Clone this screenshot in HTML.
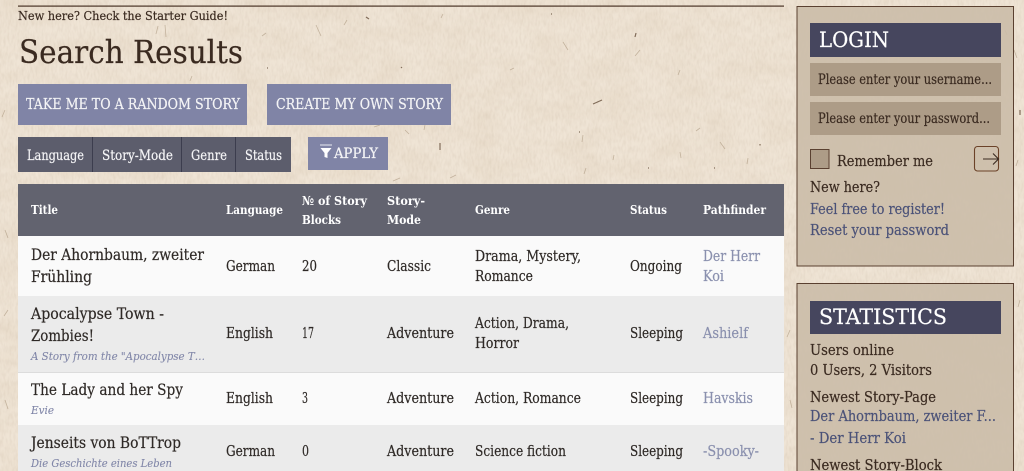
<!DOCTYPE html>
<html lang="en"><head><meta charset="utf-8"><title>Search Results</title>
<style>
html,body{margin:0;padding:0;width:1024px;height:471px;overflow:hidden;background:#efe4d5}
svg{display:block;position:absolute;left:0;top:0}
text{font-family:"DejaVu Serif","Liberation Serif",serif;font-size:14.5px;fill:#2e2926;stroke:#2e2926;stroke-width:.2px}
.h{font-weight:700;font-size:12.5px;fill:#fff;stroke:none}
.t{font-size:15.5px}
.i{font-style:italic;font-size:11.5px;fill:#8086a8;stroke:#8086a8;stroke-width:.1px}
.l{fill:#8a90ae;stroke:#8a90ae}
.s{fill:#3a2a20;stroke:#3a2a20}
.a{fill:#4b5278;stroke:#4b5278}
.w{fill:#f4f4f6;stroke:#f4f4f6}
</style></head><body>
<svg width="1024" height="471" viewBox="0 0 1024 471">
<defs>
<filter id="mot" x="0" y="0" width="100%" height="100%"><feTurbulence type="fractalNoise" baseFrequency=".03 .05" numOctaves="3" seed="5"/><feColorMatrix values="0 0 0 0 .6  0 0 0 0 .47  0 0 0 0 .32  .3 0 0 0 -.1"/></filter>
<filter id="fine" x="0" y="0" width="100%" height="100%"><feTurbulence type="fractalNoise" baseFrequency=".5 .15" numOctaves="2" seed="9"/><feColorMatrix values="0 0 0 0 .5  0 0 0 0 .4  0 0 0 0 .3  0 .35 0 0 -.13"/></filter>
</defs>
<rect width="1024" height="471" fill="#efe4d5"/>
<rect width="1024" height="471" filter="url(#mot)"/>
<rect width="1024" height="471" filter="url(#fine)"/>
<path fill="none" stroke="#a8957c" stroke-width=".8" opacity=".6" d="M316 25l5 11M266 33l-4 3M347 20l-3 5M165 25l1 12M156 34l2-8M443 14l-2 4M192 76l-2 5M380 125l-6 2M405 130l4 4M425 125l-1 5M563 42l5 8M640 50l-5 6M700 128l-4 3M720 142l5 7M583 135l-1 7M514 68l-4 2M680 70l-2 5M5 110l-3 7M5 230l3 8M8 310l-4 6M5 400l3 9M1014 50l3 8M1005 30l2 5M1018 160l-2 6M1020 300l-2 7M790 330l-3 7M790 400l2 8M400 178l-7 3M450 178l6-3M586 168l-2 6M614 155l-1 5M680 152l1 6M748 158l-1 6"/>
<path fill="none" stroke="#5d4632" stroke-width="1.2" opacity=".75" d="M366 17l3 2M267 68h1M401 67l1 1M440 143v7M636 33l-1 4M593 104l9-4M551 14h1M760 144v1.500M579 132h1M714 168h1M648 168h1M1020 110v5"/>

<!-- top -->
<rect x="18" y="5.500" width="766" height="1.200" fill="#4a3426"/>
<text x="18" y="20" class="s" lengthAdjust="spacingAndGlyphs" textLength="210" style="font-size:12.5px">New here? Check the Starter Guide!</text>
<text x="19" y="63" class="s" lengthAdjust="spacingAndGlyphs" textLength="224" style="font-size:32px">Search Results</text>

<!-- buttons -->
<rect x="18" y="84" width="229" height="41" fill="#8084a6"/>
<rect x="267" y="84" width="184" height="41" fill="#8084a6"/>
<text x="26" y="109" class="w" lengthAdjust="spacingAndGlyphs" textLength="214" style="font-size:14.5px">TAKE ME TO A RANDOM STORY</text>
<text x="276" y="109" class="w" lengthAdjust="spacingAndGlyphs" textLength="167" style="font-size:14.5px">CREATE MY OWN STORY</text>

<!-- filters -->
<rect x="18" y="137" width="273" height="35" fill="#5c5d6c"/>
<path d="M92.500 137v35M181.500 137v35M235.500 137v35" stroke="#3c3d4e" stroke-width="1"/>
<text x="27" y="160" class="w" lengthAdjust="spacingAndGlyphs" textLength="57" style="font-size:13.5px">Language</text>
<text x="102" y="160" class="w" lengthAdjust="spacingAndGlyphs" textLength="71" style="font-size:13.5px">Story-Mode</text>
<text x="191" y="160" class="w" lengthAdjust="spacingAndGlyphs" textLength="36" style="font-size:13.5px">Genre</text>
<text x="245" y="160" class="w" lengthAdjust="spacingAndGlyphs" textLength="37" style="font-size:13.5px">Status</text>
<rect x="308" y="137" width="80" height="33" fill="#8084a6"/>
<path d="M320 145h12" stroke="#d8d9e4" stroke-width="1.200"/>
<path d="M320.500 148h11l-4 5v5l-3-1v-4z" fill="#fff"/>
<text x="334" y="158" class="w" lengthAdjust="spacingAndGlyphs" textLength="44" style="font-size:13.500px">APPLY</text>

<!-- table -->
<rect x="18" y="184" width="766" height="52" fill="#62636f"/>
<rect x="18" y="236" width="766" height="60" fill="#fafafa"/>
<rect x="18" y="296" width="766" height="76" fill="#ebebeb"/>
<rect x="18" y="372" width="766" height="53" fill="#fafafa"/>
<rect x="18" y="425" width="766" height="46" fill="#ebebeb"/>
<path d="M18 372.500h766" stroke="#dcdcdc"/>

<text x="31" y="214" class="h" lengthAdjust="spacingAndGlyphs" textLength="27">Title</text>
<text x="226" y="214" class="h" lengthAdjust="spacingAndGlyphs" textLength="57">Language</text>
<text x="302" y="205" class="h" lengthAdjust="spacingAndGlyphs" textLength="65">№ of Story</text>
<text x="302" y="224" class="h" lengthAdjust="spacingAndGlyphs" textLength="39">Blocks</text>
<text x="387" y="205" class="h" lengthAdjust="spacingAndGlyphs" textLength="38">Story-</text>
<text x="387" y="224" class="h" lengthAdjust="spacingAndGlyphs" textLength="34">Mode</text>
<text x="475" y="214" class="h" lengthAdjust="spacingAndGlyphs" textLength="35">Genre</text>
<text x="630" y="214" class="h" lengthAdjust="spacingAndGlyphs" textLength="37">Status</text>
<text x="703" y="214" class="h" lengthAdjust="spacingAndGlyphs" textLength="63">Pathfinder</text>

<text x="31" y="260" class="t" lengthAdjust="spacingAndGlyphs" textLength="173">Der Ahornbaum, zweiter</text>
<text x="31" y="282" class="t" lengthAdjust="spacingAndGlyphs" textLength="61">Frühling</text>
<text x="226" y="271" lengthAdjust="spacingAndGlyphs" textLength="49">German</text>
<text x="302" y="271" lengthAdjust="spacingAndGlyphs" textLength="15">20</text>
<text x="387" y="271" lengthAdjust="spacingAndGlyphs" textLength="44">Classic</text>
<text x="475" y="261" lengthAdjust="spacingAndGlyphs" textLength="106">Drama, Mystery,</text>
<text x="475" y="281" lengthAdjust="spacingAndGlyphs" textLength="58">Romance</text>
<text x="630" y="271" lengthAdjust="spacingAndGlyphs" textLength="52">Ongoing</text>
<text x="703" y="261" class="l" lengthAdjust="spacingAndGlyphs" textLength="57">Der Herr</text>
<text x="703" y="281" class="l" lengthAdjust="spacingAndGlyphs" textLength="21">Koi</text>

<text x="31" y="319" class="t" lengthAdjust="spacingAndGlyphs" textLength="133">Apocalypse Town -</text>
<text x="31" y="341" class="t" lengthAdjust="spacingAndGlyphs" textLength="63">Zombies!</text>
<text x="31" y="360" class="i" lengthAdjust="spacingAndGlyphs" textLength="174">A Story from the "Apocalypse T…</text>
<text x="226" y="338" lengthAdjust="spacingAndGlyphs" textLength="47">English</text>
<text x="302" y="338" lengthAdjust="spacingAndGlyphs" textLength="12">17</text>
<text x="387" y="338" lengthAdjust="spacingAndGlyphs" textLength="67">Adventure</text>
<text x="475" y="328" lengthAdjust="spacingAndGlyphs" textLength="94">Action, Drama,</text>
<text x="475" y="348" lengthAdjust="spacingAndGlyphs" textLength="44">Horror</text>
<text x="630" y="338" lengthAdjust="spacingAndGlyphs" textLength="53">Sleeping</text>
<text x="703" y="338" class="l" lengthAdjust="spacingAndGlyphs" textLength="45">Ashielf</text>

<text x="31" y="395" class="t" lengthAdjust="spacingAndGlyphs" textLength="152">The Lady and her Spy</text>
<text x="31" y="414" class="i" lengthAdjust="spacingAndGlyphs" textLength="23">Evie</text>
<text x="226" y="403" lengthAdjust="spacingAndGlyphs" textLength="47">English</text>
<text x="302" y="403" lengthAdjust="spacingAndGlyphs" textLength="6">3</text>
<text x="387" y="403" lengthAdjust="spacingAndGlyphs" textLength="67">Adventure</text>
<text x="475" y="403" lengthAdjust="spacingAndGlyphs" textLength="106">Action, Romance</text>
<text x="630" y="403" lengthAdjust="spacingAndGlyphs" textLength="53">Sleeping</text>
<text x="703" y="403" class="l" lengthAdjust="spacingAndGlyphs" textLength="50">Havskis</text>

<text x="31" y="448" class="t" lengthAdjust="spacingAndGlyphs" textLength="150">Jenseits von BoTTrop</text>
<text x="31" y="467" class="i" lengthAdjust="spacingAndGlyphs" textLength="141">Die Geschichte eines Leben</text>
<text x="226" y="456" lengthAdjust="spacingAndGlyphs" textLength="49">German</text>
<text x="302" y="456" lengthAdjust="spacingAndGlyphs" textLength="7">0</text>
<text x="387" y="456" lengthAdjust="spacingAndGlyphs" textLength="67">Adventure</text>
<text x="475" y="456" lengthAdjust="spacingAndGlyphs" textLength="91">Science fiction</text>
<text x="630" y="456" lengthAdjust="spacingAndGlyphs" textLength="53">Sleeping</text>
<text x="703" y="456" class="l" lengthAdjust="spacingAndGlyphs" textLength="56">-Spooky-</text>

<!-- login -->
<rect x="797" y="6.500" width="216.500" height="259.500" fill="#cbbca8" fill-opacity=".9" stroke="#5a4030"/>
<rect x="810" y="23" width="191" height="34" fill="#46465e"/>
<text x="819" y="47" lengthAdjust="spacingAndGlyphs" style="font-size:21px;fill:#fff;stroke:#fff" textLength="70">LOGIN</text>
<rect x="810" y="63" width="191" height="33" fill="#ad9c87"/>
<rect x="810" y="102" width="191" height="33" fill="#ad9c87"/>
<text x="818" y="84" class="s" style="font-size:13.500px" lengthAdjust="spacingAndGlyphs" textLength="174">Please enter your username...</text>
<text x="818" y="123" class="s" style="font-size:13.500px" lengthAdjust="spacingAndGlyphs" textLength="172">Please enter your password...</text>
<rect x="810.500" y="149.500" width="18.500" height="19" fill="#ad9c87" stroke="#5a4030"/>
<text x="837" y="166" class="s" lengthAdjust="spacingAndGlyphs" textLength="96">Remember me</text>
<rect x="974.500" y="146.500" width="24" height="24.500" rx="3" fill="none" stroke="#6b4228" stroke-width="1.100"/>
<path d="M983 159h15M993 153.500l5.500 5.500-5.500 5.500" fill="none" stroke="#3a2a20" stroke-width="1.100"/>
<text x="810" y="192" class="s" lengthAdjust="spacingAndGlyphs" textLength="70">New here?</text>
<text x="810" y="214" class="a" lengthAdjust="spacingAndGlyphs" textLength="135">Feel free to register!</text>
<text x="810" y="235" class="a" lengthAdjust="spacingAndGlyphs" textLength="139">Reset your password</text>

<!-- statistics -->
<rect x="797" y="283.500" width="216.500" height="195" fill="#cbbca8" fill-opacity=".9" stroke="#5a4030"/>
<rect x="810" y="301" width="191" height="33" fill="#46465e"/>
<text x="819" y="324" lengthAdjust="spacingAndGlyphs" style="font-size:21px;fill:#fff;stroke:#fff" textLength="128">STATISTICS</text>
<text x="810" y="355" class="s" lengthAdjust="spacingAndGlyphs" textLength="84">Users online</text>
<text x="810" y="375" class="s" lengthAdjust="spacingAndGlyphs" textLength="122">0 Users, 2 Visitors</text>
<text x="810" y="402" class="s" lengthAdjust="spacingAndGlyphs" textLength="126">Newest Story-Page</text>
<text x="810" y="421" class="a" lengthAdjust="spacingAndGlyphs" textLength="186">Der Ahornbaum, zweiter F...</text>
<text x="810" y="443" class="a" lengthAdjust="spacingAndGlyphs" textLength="96">- Der Herr Koi</text>
<text x="810" y="470" class="s" lengthAdjust="spacingAndGlyphs" textLength="132">Newest Story-Block</text>
</svg>
</body></html>
